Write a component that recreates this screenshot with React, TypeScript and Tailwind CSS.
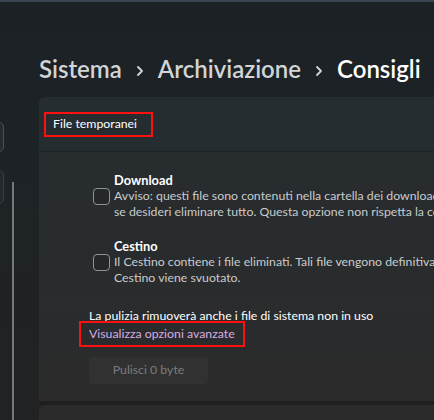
const font = { fontFamily: 'Lato, "Open Sans", sans-serif' };

function Chevron() {
  return (
    <svg width="8" height="12" viewBox="0 0 8 12" className="mx-[14px] mt-[3px] shrink-0">
      <polyline points="2,2 6,6 2,10" fill="none" stroke="#d2d4d6" strokeWidth="1.8" strokeLinecap="round" strokeLinejoin="round" />
    </svg>
  );
}

function CleanupItem({ title, lines }: { title: string; lines: string[] }) {
  return (
    <div className="flex items-center gap-[4px]">
      <div className="w-[17px] h-[17px] shrink-0 rounded-[4px] border border-[#8f9396] bg-[#24282b]" />
      <div className="text-[12.3px] leading-[16px] whitespace-nowrap">
        <div className="text-[12.8px] font-bold text-white">{title}</div>
        {lines.map((l) => (
          <div key={l} className="text-[#c9cbcc]">
            {l}
          </div>
        ))}
      </div>
    </div>
  );
}

export default function App() {
  return (
    <div
      className="w-[434px] h-[420px] overflow-hidden bg-gradient-to-b from-[#1b2125] via-[#1e2326] to-[#212223] flex flex-col"
      style={font}
    >
      <div className="h-[2px] bg-[#3a4552] shrink-0" />
      <div className="flex flex-1 min-h-0">
        {/* sidebar edge */}
        <div className="w-[39px] shrink-0 relative flex flex-col">
          <div className="mt-[120px] -ml-[20px] w-[24px] h-[30px] rounded-[5px] border border-[#4a5055] bg-[#252b2f]" />
          <div className="mt-[18px] -ml-[20px] w-[24px] h-[34px] rounded-[5px] border border-[#3a4045] bg-[#22282c]" />
          <div className="absolute left-[12px] top-[180px] bottom-0 w-[2px] bg-[#75797c]" />
        </div>

        <div className="flex-1 min-w-0 flex flex-col">
          <div className="h-[52px] shrink-0" />
          <div className="flex items-center h-[30px] text-[24px] font-semibold whitespace-nowrap">
            <span className="text-[#d2d4d6]">Sistema</span>
            <Chevron />
            <span className="text-[#d2d4d6]">Archiviazione</span>
            <Chevron />
            <span className="text-white">Consigli</span>
          </div>
          <div className="h-[13px] shrink-0" />

          <div className="w-[420px] rounded-tl-[6px] overflow-hidden shrink-0">
            <div className="h-[55px] bg-[#262d31] flex items-center pl-[5px] border-b border-[#1d2225]">
              <span className="inline-flex items-center h-[25px] w-[109px] border-2 border-[#ff1010] pl-[7px] text-[12.3px] text-white">
                File temporanei
              </span>
            </div>
            <div className="h-[249px] bg-gradient-to-b from-[#272c2f] to-[#2b2b2b] pt-[20px] pl-[54px] flex flex-col">
              <CleanupItem
                title="Download"
                lines={[
                  'Avviso: questi file sono contenuti nella cartella dei download',
                  'se desideri eliminare tutto. Questa opzione non rispetta la configurazione',
                ]}
              />
              <div className="h-[18px]" />
              <CleanupItem
                title="Cestino"
                lines={[
                  'Il Cestino contiene i file eliminati. Tali file vengono definitivamente',
                  'Cestino viene svuotato.',
                ]}
              />
              <div className="-ml-[4px] mt-[22px] text-[12.3px] leading-[16px] whitespace-nowrap">
                <div className="text-white">La pulizia rimuoverà anche i file di sistema non in uso</div>
                <span className="inline-block -ml-[10px] -mt-[3px] px-[8px] py-[3px] border-2 border-[#ff1010] text-[#d9ace3]">
                  Visualizza opzioni avanzate
                </span>
              </div>
              <button className="mt-[10px] -ml-[4px] w-[119px] h-[27px] rounded-[4px] bg-[#313131] text-[12.3px] text-[#7c7c7c]">
                Pulisci 0 byte
              </button>
            </div>
            <div className="h-[4px] bg-[#1f1f1f]" />
            <div className="h-[30px] bg-[#2b2b2b] rounded-tl-[6px]" />
          </div>
        </div>
      </div>
    </div>
  );
}
